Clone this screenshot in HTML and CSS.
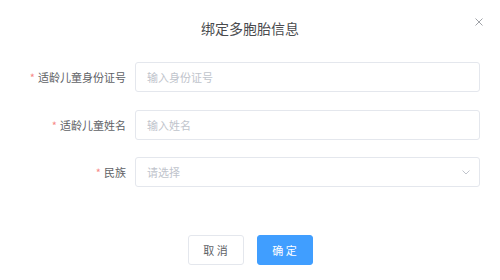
FILE: index.html
```html
<!DOCTYPE html>
<html lang="zh-CN">
<head>
<meta charset="utf-8">
<link rel="stylesheet" href="styles.css">
</head>
<body>
<div class="dialog">
  <div class="header">
    <span class="title">绑定多胞胎信息</span>
    <span class="close">
      <svg width="8" height="8" viewBox="0 0 8 8"><path d="M0.5 0.5 L7.5 7.5 M7.5 0.5 L0.5 7.5" stroke="#a0a3a8" stroke-width="1" fill="none"/></svg>
    </span>
  </div>
  <div class="form">
    <div class="row">
      <label class="label"><span class="star">*</span>适龄儿童身份证号</label>
      <div class="input"><span class="ph">输入身份证号</span></div>
    </div>
    <div class="row">
      <label class="label"><span class="star">*</span>适龄儿童姓名</label>
      <div class="input"><span class="ph">输入姓名</span></div>
    </div>
    <div class="row">
      <label class="label"><span class="star">*</span>民族</label>
      <div class="input select"><span class="ph">请选择</span>
        <svg class="arrow" width="8" height="5" viewBox="0 0 8 5"><path d="M0.5 0.5 L4 4 L7.5 0.5" stroke="#c0c4cc" stroke-width="1" fill="none"/></svg>
      </div>
    </div>
  </div>
  <div class="footer">
    <button class="btn cancel">取 消</button>
    <button class="btn primary">确 定</button>
  </div>
</div>
</body>
</html>
```
FILE: styles.css
```css
html, body {
  margin: 0;
  padding: 0;
  background: #ffffff;
}
body {
  font-family: "Noto Sans CJK SC", "Noto Sans", sans-serif;
  width: 500px;
  height: 280px;
  overflow: hidden;
}
.dialog {
  width: 500px;
  height: 280px;
  position: relative;
}
.header {
  position: relative;
  padding-top: 15px;
  height: 20px;
  text-align: center;
}
.title {
  font-size: 14px;
  line-height: 20px;
  color: #4a4b4e;
}
.close {
  position: absolute;
  left: 475px;
  top: 18px;
  width: 8px;
  height: 8px;
  display: block;
}
.close svg { display: block; }
.form {
  margin-top: 27px;
  display: flex;
  flex-direction: column;
  gap: 17.5px;
}
.row {
  display: flex;
  align-items: center;
  height: 30px;
}
.label {
  width: 126px;
  text-align: right;
  font-size: 11px;
  color: #606266;
  padding-right: 9px;
  box-sizing: content-box;
}
.star {
  color: #f78989;
  margin-right: 3px;
}
.input {
  width: 345px;
  height: 30px;
  box-sizing: border-box;
  border: 1px solid #e4e7ed;
  border-radius: 3px;
  padding-left: 11px;
  display: flex;
  align-items: center;
  position: relative;
}
.ph {
  font-size: 11px;
  color: #c0c4cc;
}
.select { justify-content: space-between; padding-right: 9px; }
.arrow { display: block; }
.footer {
  margin-top: 48px;
  display: flex;
  justify-content: center;
  gap: 13px;
}
.btn {
  width: 56px;
  height: 30px;
  border-radius: 3px;
  font-family: "Noto Sans CJK SC", "Noto Sans", sans-serif;
  font-size: 11px;
  padding: 0;
  cursor: pointer;
}
.cancel {
  background: #ffffff;
  border: 1px solid #e4e7ed;
  color: #606266;
}
.primary {
  background: #409eff;
  border: 1px solid #409eff;
  color: #ffffff;
}
```
